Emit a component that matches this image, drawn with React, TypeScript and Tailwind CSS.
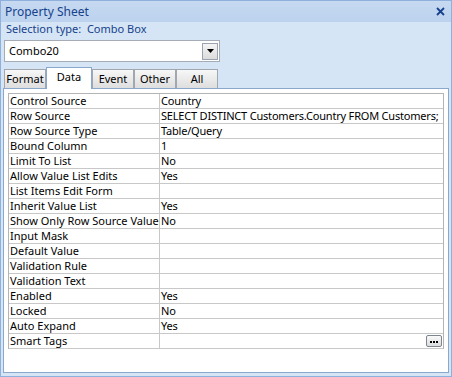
const ROWS: [string, string][] = [
  ["Control Source", "Country"],
  ["Row Source", "SELECT DISTINCT Customers.Country FROM Customers;"],
  ["Row Source Type", "Table/Query"],
  ["Bound Column", "1"],
  ["Limit To List", "No"],
  ["Allow Value List Edits", "Yes"],
  ["List Items Edit Form", ""],
  ["Inherit Value List", "Yes"],
  ["Show Only Row Source Values", "No"],
  ["Input Mask", ""],
  ["Default Value", ""],
  ["Validation Rule", ""],
  ["Validation Text", ""],
  ["Enabled", "Yes"],
  ["Locked", "No"],
  ["Auto Expand", "Yes"],
  ["Smart Tags", ""],
];

const TABS = ["Format", "Data", "Event", "Other", "All"];

export default function App() {
  return (
    <div
      className="w-[452px] h-[377px] border border-[#8fb0dc] bg-[#d6e5f5] flex flex-col text-[11px] text-black overflow-hidden"
      style={{ fontFamily: '"Noto Sans", "DejaVu Sans", sans-serif' }}
    >
      <div className="h-[21px] shrink-0 flex items-center justify-between pl-[4px] pr-[6px] bg-gradient-to-b from-[#c6d9f1] to-[#bcd2ee] text-[#15428b] text-[12px]">
        <span>Property Sheet</span>
        <svg width="9" height="9" viewBox="0 0 9 9">
          <path d="M1 1L8 8M8 1L1 8" stroke="#15428b" strokeWidth="1.8" />
        </svg>
      </div>
      <div className="h-[14px] shrink-0 flex items-center pl-[5px] text-[#15428b]">
        Selection type:&nbsp;&nbsp;Combo Box
      </div>
      <div className="mt-[4px] ml-[3px] w-[216px] h-[22px] shrink-0 bg-white border border-[#a5acb5] flex items-center justify-between pl-[4px] pr-[1px]">
        <span>Combo20</span>
        <div className="w-[16px] h-[17px] border border-[#9aa4b0] bg-gradient-to-b from-[#f4f4f4] to-[#dcdcdc] flex items-center justify-center">
          <svg width="7" height="4" viewBox="0 0 7 4">
            <path d="M0 0H7L3.5 4Z" fill="#000" />
          </svg>
        </div>
      </div>
      <div className="mt-[4px] ml-[3px] flex items-end h-[22px] shrink-0">
        {TABS.map((t) =>
          t === "Data" ? (
            <div
              key={t}
              className="w-[46px] h-[22px] bg-white border border-b-0 border-[#8aa7cc] flex items-start justify-center pt-[1px] -mb-px relative z-10"
            >
              {t}
            </div>
          ) : (
            <div
              key={t}
              className="w-[42px] h-[19px] border border-b-0 border-[#a0a7b0] bg-gradient-to-b from-[#f7f7f7] to-[#dedede] flex items-center justify-center"
            >
              {t}
            </div>
          )
        )}
      </div>
      <div className="mx-[2px] mb-[3px] flex-1 bg-white border border-[#8aa7cc] pt-[4px] px-[4px]">
        <div className="border border-[#b4b4b4] border-b-0">
          {ROWS.map(([k, v]) => (
            <div key={k} className="flex h-[15px] border-b border-[#c8c8c8] leading-[14px]">
              <div className="w-[151px] shrink-0 border-r border-[#c8c8c8] pl-[1px] whitespace-nowrap overflow-hidden">
                {k}
              </div>
              <div className="flex-1 pl-[1px] whitespace-nowrap overflow-hidden flex items-center justify-between tracking-[-0.2px]">
                <span>{v}</span>
                {k === "Smart Tags" && (
                  <div className="w-[16px] h-[12px] mr-[1px] border border-[#7d8590] rounded-[2px] bg-gradient-to-b from-[#fafafa] to-[#dcdcdc] flex items-end justify-center pb-[3px] gap-[1px]">
                    <span className="w-[2px] h-[2px] bg-black" />
                    <span className="w-[2px] h-[2px] bg-black" />
                    <span className="w-[2px] h-[2px] bg-black" />
                  </div>
                )}
              </div>
            </div>
          ))}
        </div>
      </div>
    </div>
  );
}
